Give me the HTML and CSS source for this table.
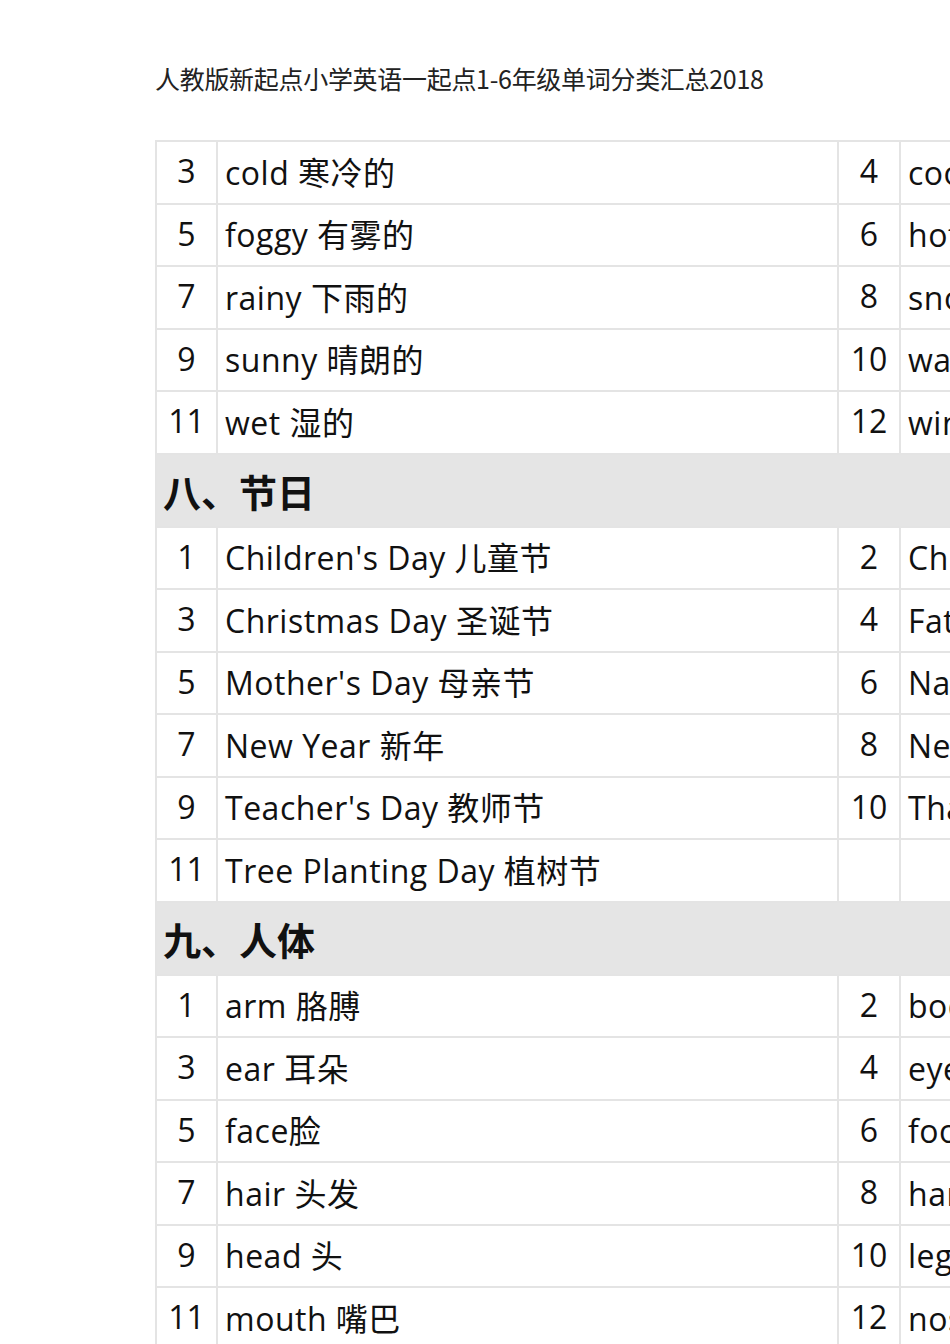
FILE: index.html
```html
<!DOCTYPE html>
<html lang="zh-CN">
<head>
<meta charset="utf-8">
<title>人教版新起点小学英语一起点1-6年级单词分类汇总2018</title>
<link rel="stylesheet" href="styles.css">
</head>
<body>
<div class="page">
  <h1 class="doc-title">人教版新起点小学英语一起点1-6年级单词分类汇总2018</h1>
  <div class="sheet">
    <div class="num">3</div><div class="word">cold 寒冷的</div><div class="num">4</div><div class="word">cool 凉爽的</div>
    <div class="num">5</div><div class="word">foggy 有雾的</div><div class="num">6</div><div class="word">hot 热的</div>
    <div class="num">7</div><div class="word">rainy 下雨的</div><div class="num">8</div><div class="word">snowy 下雪的</div>
    <div class="num">9</div><div class="word">sunny 晴朗的</div><div class="num">10</div><div class="word">warm 温暖的</div>
    <div class="num">11</div><div class="word">wet 湿的</div><div class="num">12</div><div class="word">windy 有风的</div>

    <div class="section">八、节日</div>
    <div class="num">1</div><div class="word">Children's Day 儿童节</div><div class="num">2</div><div class="word">Chinese New Year 春节</div>
    <div class="num">3</div><div class="word">Christmas Day 圣诞节</div><div class="num">4</div><div class="word">Father's Day 父亲节</div>
    <div class="num">5</div><div class="word">Mother's Day 母亲节</div><div class="num">6</div><div class="word">National Day 国庆节</div>
    <div class="num">7</div><div class="word">New Year 新年</div><div class="num">8</div><div class="word">New Year's Day 元旦</div>
    <div class="num">9</div><div class="word">Teacher's Day 教师节</div><div class="num">10</div><div class="word">Thanksgiving Day 感恩节</div>
    <div class="num">11</div><div class="word">Tree Planting Day 植树节</div><div class="num"></div><div class="word"></div>

    <div class="section">九、人体</div>
    <div class="num">1</div><div class="word">arm 胳膊</div><div class="num">2</div><div class="word">body 身体</div>
    <div class="num">3</div><div class="word">ear 耳朵</div><div class="num">4</div><div class="word">eye 眼睛</div>
    <div class="num">5</div><div class="word">face脸</div><div class="num">6</div><div class="word">foot 脚</div>
    <div class="num">7</div><div class="word">hair 头发</div><div class="num">8</div><div class="word">hand 手</div>
    <div class="num">9</div><div class="word">head 头</div><div class="num">10</div><div class="word">leg 腿</div>
    <div class="num">11</div><div class="word">mouth 嘴巴</div><div class="num">12</div><div class="word">nose 鼻子</div>
    <div class="num">13</div><div class="word">shoulder 肩膀</div><div class="num">14</div><div class="word">tooth 牙齿</div>
  </div>
</div>
</body>
</html>
```

FILE: styles.css
```css
html, body {
  margin: 0;
  padding: 0;
  background: #ffffff;
  overflow: hidden;
}

.page {
  width: 950px;
  height: 1344px;
  overflow: hidden;
  padding-left: 155px;
  box-sizing: border-box;
  font-family: "Open Sans", "Noto Sans CJK SC", sans-serif;
  color: #111111;
}

.doc-title {
  margin: 0;
  padding-top: 61px;
  height: 140px;
  box-sizing: border-box;
  font-size: 25px;
  line-height: 34px;
  font-weight: normal;
  color: #222222;
  white-space: nowrap;
  letter-spacing: -0.3px;
  font-family: "Noto Sans CJK SC", sans-serif;
}

.sheet {
  display: grid;
  grid-template-columns: 59px 619px 60px 620px;
  grid-auto-rows: auto;
  gap: 2px;
  padding: 2px;
  background: #e4e4e4;
  width: max-content;
  font-size: 32px;
}

.num, .word {
  height: 60.5px;
  box-sizing: border-box;
  padding-bottom: 3px;
  background: #ffffff;
  display: flex;
  align-items: center;
  white-space: nowrap;
  overflow: hidden;
}

.num {
  justify-content: center;
}

.word {
  padding-left: 7px;
  letter-spacing: 0.5px;
}

.section {
  grid-column: 1 / -1;
  height: 71px;
  background: #e5e5e5;
  display: flex;
  align-items: center;
  padding-left: 6px;
  font-size: 38px;
  font-weight: bold;
  font-family: "Noto Sans CJK SC", sans-serif;
}
```
